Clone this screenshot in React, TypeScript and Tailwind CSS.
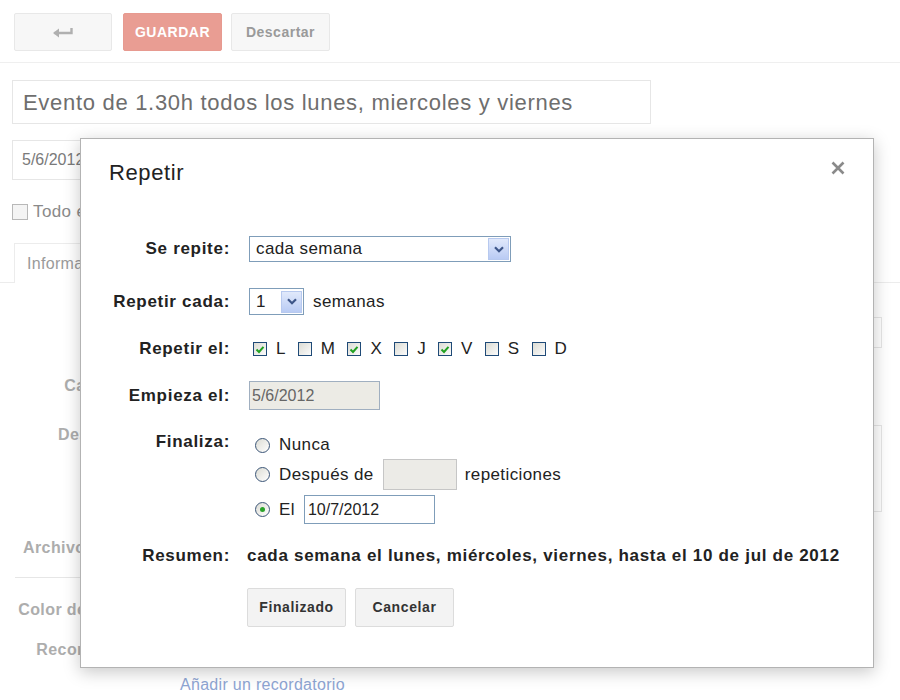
import React from "react";

const Chevron = () => (
  <svg width="10" height="7" viewBox="0 0 10 7">
    <path d="M1 1.2 L5 5.2 L9 1.2" fill="none" stroke="#3d5689" strokeWidth="2.2" />
  </svg>
);

const ArrowBox = () => (
  <div className="flex h-[22px] w-[21px] items-center justify-center border border-[#b7c9ef] bg-gradient-to-b from-[#e1e9fb] to-[#b9cbf4]">
    <Chevron />
  </div>
);

const Check = ({ on }: { on: boolean }) => (
  <div className="flex h-[14px] w-[14px] items-center justify-center border border-[#1f4a77] bg-gradient-to-br from-[#dcdcd4] to-[#fbfbfb]">
    {on && (
      <svg width="10" height="9" viewBox="0 0 10 9">
        <path d="M1.5 4.5 L4 7 L8.5 1.8" fill="none" stroke="#21a121" strokeWidth="2" />
      </svg>
    )}
  </div>
);

const Radio = ({ on }: { on: boolean }) => (
  <div className="flex h-[15px] w-[15px] items-center justify-center rounded-full border border-[#3b5577] bg-gradient-to-br from-[#dcdcd4] to-white">
    {on && <div className="h-[5px] w-[5px] rounded-full bg-[#2aa32a]" />}
  </div>
);

const days: [string, boolean][] = [
  ["L", true],
  ["M", false],
  ["X", true],
  ["J", false],
  ["V", true],
  ["S", false],
  ["D", false],
];

export default function App() {
  const lab = "w-[149px] shrink-0 text-right text-[17px] leading-[20px] font-bold tracking-[0.7px] text-[#222]";
  const reg = "text-[17px] leading-[20px] tracking-[0.4px] text-[#222]";
  const bgLab = "text-[16px] leading-[20px] font-bold tracking-[0.4px] text-[#adadad]";
  return (
    <div className="relative h-[700px] w-[900px] overflow-hidden bg-white font-[family-name:Liberation_Sans,Arial,sans-serif]">
      {/* background page (faded) */}
      <div className="pt-[13px]">
        <div className="flex pl-[14px]">
          <div className="flex h-[38px] w-[98px] items-center justify-center rounded-[2px] border border-[#e8e8e8] bg-[#f7f7f7]">
            <svg width="22" height="12" viewBox="0 0 22 12">
              <path d="M2.5 7 H19.5 V2" fill="none" stroke="#b0b0b0" strokeWidth="2.4" />
              <path d="M1 7 L7 2.5 L7 11.5 Z" fill="#b0b0b0" />
            </svg>
          </div>
          <div className="ml-[11px] flex h-[38px] w-[99px] items-center justify-center rounded-[2px] border border-[#e79a90] bg-[#e99d93] text-[14px] font-bold tracking-[0.5px] text-white">
            GUARDAR
          </div>
          <div className="ml-[9px] flex h-[38px] w-[99px] items-center justify-center rounded-[2px] border border-[#e8e8e8] bg-[#f7f7f7] text-[14px] font-bold tracking-[0.5px] text-[#9a9a9a]">
            Descartar
          </div>
        </div>
        <div className="mt-[11px] border-b border-[#efefef]" />
        <div className="ml-[12px] mt-[17px] flex h-[44px] w-[639px] items-center border border-[#e6e6e6] pl-[10px] text-[22px] tracking-[0.7px] text-[#6e6e6e]">
          Evento de 1.30h todos los lunes, miercoles y viernes
        </div>
        <div className="ml-[12px] mt-[16px] flex h-[40px] w-[120px] items-center border border-[#e6e6e6] pl-[9px] text-[16px] text-[#7a7a7a]">
          5/6/2012
        </div>
        <div className="ml-[12px] mt-[22px] flex h-[20px] items-center gap-[5px] text-[17px] tracking-[0.4px] text-[#8a8a8a]">
          <div className="h-[16px] w-[16px] border border-[#b8b8b8] bg-[#f4f4f4]" />
          Todo el día
        </div>
        <div className="mt-[21px] flex h-[40px] items-end">
          <div className="w-[14px] border-b border-[#ececec]" />
          <div className="flex h-[40px] items-center border border-b-0 border-[#ececec] px-[12px] text-[16px] tracking-[0.3px] text-[#9a9a9a]">
            Información del evento
          </div>
          <div className="flex-1 border-b border-[#ececec]" />
        </div>
        <div className="mt-[34px] flex h-[31px]">
          <div className="w-[170px]" />
          <div className="w-[712px] border border-[#e6e6e6]" />
        </div>
        <div className="mt-[23px] flex h-[30px] items-center">
          <div className={`w-[151px] text-right ${bgLab}`}>Calendario</div>
        </div>
        <div className="mt-[24px] flex h-[87px]">
          <div className={`w-[154px] text-right ${bgLab}`}>Descripción</div>
          <div className="ml-[16px] w-[712px] border border-[#e6e6e6]" />
        </div>
        <div className={`ml-[23px] mt-[26px] ${bgLab}`}>Archivos adjuntos</div>
        <div className="ml-[15px] mt-[19px] w-[700px] border-b border-[#e6e6e6]" />
        <div className={`mt-[22px] w-[150px] text-right ${bgLab}`}>Color del evento</div>
        <div className={`mt-[20px] w-[150px] text-right ${bgLab}`}>Recordatorios</div>
        <div className="ml-[180px] mt-[15px] text-[16px] leading-[20px] tracking-[0.3px] text-[#8ea5d3]">Añadir un recordatorio</div>
      </div>

      {/* dialog */}
      <div className="absolute left-[80px] top-[138px] h-[530px] w-[794px] border border-[#b3b3b3] bg-white shadow-[0_4px_16px_rgba(0,0,0,0.22)]">
        <div className="relative pl-[28px] pt-[22px] text-[22px] leading-[24px] tracking-[0.6px] text-[#222]">
          Repetir
          <svg className="absolute right-[28px] top-[22px]" width="14" height="14" viewBox="0 0 14 14">
            <path d="M1.5 1.5 L12.5 12.5 M12.5 1.5 L1.5 12.5" stroke="#8a8a8a" strokeWidth="2.6" />
          </svg>
        </div>

        <div className="mt-[51px] flex h-[26px] items-center">
          <div className={lab}>Se repite:</div>
          <div className="ml-[19px] flex h-[26px] w-[262px] items-center justify-between border border-[#7f9db9] pl-[6px] pr-[1px]">
            <span className={reg}>cada semana</span>
            <ArrowBox />
          </div>
        </div>

        <div className="mt-[26px] flex h-[27px] items-center">
          <div className={lab}>Repetir cada:</div>
          <div className="ml-[19px] flex h-[27px] w-[55px] items-center justify-between border border-[#7f9db9] pl-[6px] pr-[1px]">
            <span className={reg}>1</span>
            <ArrowBox />
          </div>
          <span className={`ml-[9px] ${reg}`}>semanas</span>
        </div>

        <div className="mt-[22px] flex h-[24px] items-center">
          <div className={lab}>Repetir el:</div>
          <div className="ml-[23px] flex items-center">
            {days.map(([d, on]) => (
              <div key={d} className="mr-[12px] flex items-center gap-[9px]">
                <Check on={on} />
                <span className={reg}>{d}</span>
              </div>
            ))}
          </div>
        </div>

        <div className="mt-[20px] flex h-[29px] items-center">
          <div className={lab}>Empieza el:</div>
          <div className="ml-[19px] flex h-[29px] w-[131px] items-center border border-[#a0afc0] bg-[#ecebe5] pl-[2px] text-[16px] text-[#666]">
            5/6/2012
          </div>
        </div>

        <div className="mt-[23px] flex">
          <div className={`${lab} -mt-[1px]`}>Finaliza:</div>
          <div className="ml-[25px] flex flex-col">
            <div className="flex h-[24px] items-center gap-[9px]">
              <Radio on={false} />
              <span className={reg}>Nunca</span>
            </div>
            <div className="mt-[2px] flex h-[31px] items-center">
              <Radio on={false} />
              <span className={`ml-[9px] ${reg}`}>Después de</span>
              <div className="ml-[9px] h-[31px] w-[74px] border border-[#c6c6c6] bg-[#ecebe7]" />
              <span className={`ml-[8px] ${reg}`}>repeticiones</span>
            </div>
            <div className="mt-[5px] flex h-[29px] items-center">
              <Radio on={true} />
              <span className={`ml-[9px] ${reg}`}>El</span>
              <div className="ml-[9px] flex h-[29px] w-[131px] items-center border border-[#7f9db9] pl-[3px] text-[16px] text-[#222]">
                10/7/2012
              </div>
            </div>
          </div>
        </div>

        <div className="mt-[20px] flex h-[24px] items-center">
          <div className={lab}>Resumen:</div>
          <div className="ml-[17px] whitespace-nowrap text-[17px] leading-[20px] font-bold tracking-[0.7px] text-[#222]">
            cada semana el lunes, miércoles, viernes, hasta el 10 de jul de 2012
          </div>
        </div>

        <div className="mt-[20px] flex pl-[166px]">
          <div className="flex h-[39px] w-[99px] items-center justify-center rounded-[2px] border border-[#dcdcdc] bg-[#f3f3f3] text-[14px] font-bold tracking-[0.6px] text-[#333]">
            Finalizado
          </div>
          <div className="ml-[9px] flex h-[39px] w-[99px] items-center justify-center rounded-[2px] border border-[#dcdcdc] bg-[#f3f3f3] text-[14px] font-bold tracking-[0.6px] text-[#333]">
            Cancelar
          </div>
        </div>
      </div>
    </div>
  );
}
